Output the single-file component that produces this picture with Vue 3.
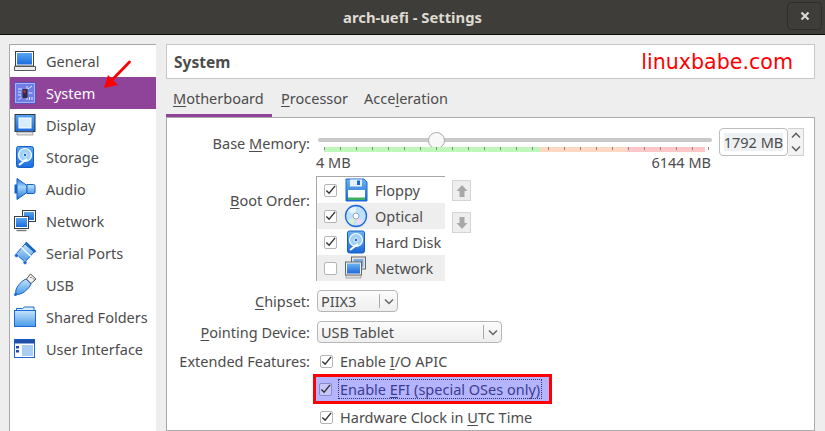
<script setup>
const sideItems = [
  { name: 'General', icon: 'general' },
  { name: 'System', icon: 'system', active: true },
  { name: 'Display', icon: 'display' },
  { name: 'Storage', icon: 'storage' },
  { name: 'Audio', icon: 'audio' },
  { name: 'Network', icon: 'network' },
  { name: 'Serial Ports', icon: 'serial' },
  { name: 'USB', icon: 'usb' },
  { name: 'Shared Folders', icon: 'folder' },
  { name: 'User Interface', icon: 'ui' },
]
const boot = [
  { name: 'Floppy', icon: 'floppy', on: true },
  { name: 'Optical', icon: 'optical', on: true, alt: true },
  { name: 'Hard Disk', icon: 'storage', on: true },
  { name: 'Network', icon: 'bootnet', on: false, alt: true },
]
const ticks = Array.from({ length: 25 }, (_, i) => i * 16)
</script>

<template>
  <div class="win">
    <header class="titlebar">
      <span class="title">arch-uefi - Settings</span>
      <span class="close">
        <svg width="10" height="10" viewBox="0 0 10 10"><path d="M1.500 1.500l7 7M8.500 1.500l-7 7" stroke="#d8d8d8" stroke-width="2.200"/></svg>
      </span>
    </header>

    <div class="body">
      <nav class="side">
        <div v-for="it in sideItems" :key="it.name" class="side-item" :class="{ active: it.active }">
          <svg class="side-icon" width="24" height="24" viewBox="0 0 24 24">
            <defs>
              <linearGradient id="blu" x1="0" y1="0" x2="0" y2="1"><stop offset="0" stop-color="#58a6f0"/><stop offset="1" stop-color="#1a6ce0"/></linearGradient>
              <linearGradient id="blu2" x1="0" y1="0" x2="0" y2="1"><stop offset="0" stop-color="#c5e4fb"/><stop offset="1" stop-color="#4b9ae8"/></linearGradient>
              <linearGradient id="horn" x1="0" y1="0" x2="0" y2="1"><stop offset="0" stop-color="#1f74dc"/><stop offset=".4" stop-color="#a5d4f8"/><stop offset="1" stop-color="#1f74dc"/></linearGradient>
            </defs>
            <template v-if="it.icon === 'general'">
              <rect x="2.500" y="2.500" width="18" height="14.500" fill="#fff" stroke="#3a3f46"/>
              <rect x="4" y="4" width="15" height="11.500" fill="url(#blu)"/>
              <path d="M1.500 17.500h21v4h-21z" fill="#ececec" stroke="#55585c"/>
            </template>
            <template v-else-if="it.icon === 'system'">
              <rect x="2.500" y="2.500" width="19" height="19" fill="#6f7de4" stroke="#a9b2f5"/>
              <rect x="1.500" y="1.500" width="21" height="21" fill="none" stroke="#4a56c8" stroke-width=".8"/>
              <path d="M5 8h4M5 11h3M5 14h3M15 8l4-3M15.500 12h4M14 19v-3M16.500 19v-3M19 19v-3M5.500 19l3-3M14 5v3" stroke="#e6e8ff" stroke-width="1"/>
              <rect x="9.500" y="8" width="5" height="9" fill="#302a4a"/>
              <rect x="10.500" y="9" width="2" height="3" fill="#b03a3a"/>
            </template>
            <template v-else-if="it.icon === 'display'">
              <rect x="2" y="1.500" width="20" height="17" fill="url(#blu)" stroke="#33383f"/>
              <rect x="6" y="5" width="12" height="10" fill="#d8ecfb" stroke="#fff"/>
              <path d="M4 19h16v3H4z" fill="#e4e4e4" stroke="#8a8a8a" stroke-width=".7"/>
            </template>
            <template v-else-if="it.icon === 'storage'">
              <rect x="3.500" y="1.500" width="17" height="21" rx="2" fill="url(#blu)" stroke="#1560c4"/>
              <circle cx="12" cy="10" r="6.500" fill="#9fd0f6" stroke="#fff" stroke-width="1.200"/>
              <circle cx="12" cy="10" r="1.800" fill="#1c68d8" stroke="#fff" stroke-width=".8"/>
              <path d="M6 20l8-6" stroke="#fff" stroke-width="2"/>
            </template>
            <template v-else-if="it.icon === 'audio'">
              <rect x="1.500" y="7.500" width="3" height="9" fill="#1560c4"/>
              <path d="M4 1.500l10 7v7l-10 7z" fill="url(#horn)" stroke="#1560c4"/>
              <path d="M14 7.500h6.500a1.500 1.500 0 0 1 1.500 1.500v6a1.500 1.500 0 0 1-1.500 1.500H14z" fill="url(#blu2)" stroke="#1560c4"/>
            </template>
            <template v-else-if="it.icon === 'network'">
              <rect x="9.500" y="1.500" width="13" height="11" fill="#fff" stroke="#3a3f46"/>
              <rect x="11" y="3" width="10" height="8" fill="url(#blu)"/>
              <rect x="1.500" y="7.500" width="14" height="12" fill="#fff" stroke="#3a3f46"/>
              <rect x="3" y="9" width="11" height="9" fill="url(#blu)"/>
              <path d="M3.500 21.500h10" stroke="#777" stroke-width="1.400"/>
            </template>
            <template v-else-if="it.icon === 'serial'">
              <path d="M3 13L12 3l9 8-9 10z" fill="url(#blu2)" stroke="#1560c4"/>
              <path d="M12.500 1.500l10 9.500" stroke="#1560c4" stroke-width="2.400"/>
              <path d="M8 6l10 9.500" stroke="#eaf4fd" stroke-width="1.600"/>
              <circle cx="3.500" cy="14.500" r="2" fill="#1c68d8" stroke="#fff" stroke-width=".5"/>
              <circle cx="12" cy="21.500" r="2" fill="#1c68d8" stroke="#fff" stroke-width=".5"/>
            </template>
            <template v-else-if="it.icon === 'usb'">
              <path d="M3 21c-2-5 5-13 10-15l5 5c-2 5-10 12-15 10z" fill="url(#blu2)" stroke="#1560c4"/>
              <path d="M13.500 6l4-5 5.500 5-5 4.500z" fill="#f2f2f2" stroke="#555"/>
              <path d="M17.500 4l1 1M20 5.500l1 1" stroke="#333"/>
              <circle cx="2.500" cy="21.500" r="1.500" fill="#1c68d8"/>
            </template>
            <template v-else-if="it.icon === 'folder'">
              <path d="M3.500 6V3.500h6l2-1.500h9.500V6z" fill="#dceefc" stroke="#1c68d8"/>
              <rect x="1.500" y="5.500" width="21" height="16" fill="url(#blu2)" stroke="#1c68d8"/>
            </template>
            <template v-else-if="it.icon === 'ui'">
              <rect x="1.500" y="2.500" width="20" height="18" fill="#fff" stroke="#1c68d8"/>
              <rect x="1.500" y="2.500" width="20" height="4" fill="#1f4fa8"/>
              <rect x="3" y="9" width="3" height="2.500" fill="#1f4fa8"/>
              <rect x="3" y="13" width="3" height="2.500" fill="#1f4fa8"/>
              <rect x="9" y="8" width="11" height="11" fill="#a8cdf5"/>
            </template>
          </svg>
          <span>{{ it.name }}</span>
        </div>
        <svg class="arrow" width="34" height="32" viewBox="0 0 34 32"><path d="M29.500 2L12 20" stroke="#f00" stroke-width="2.800" stroke-linecap="round"/><path d="M4 28L8 15 18 25z" fill="#f00"/></svg>
      </nav>

      <main class="main">
        <div class="heading">
          <span class="h-title">System</span>
          <span class="brand">linuxbabe.com</span>
        </div>

        <div class="tabs">
          <span class="tab active"><u>M</u>otherboard</span>
          <span class="tab"><u>P</u>rocessor</span>
          <span class="tab">Acce<u>l</u>eration</span>
        </div>

        <section class="panel">
          <div class="row mem-row">
            <label class="lab">Base <u>M</u>emory:</label>
            <div class="slider">
              <div class="track"><span class="knob"></span></div>
              <div class="band">
                <span class="b-green"></span><span class="b-orange"></span><span class="b-red"></span>
                <i v-for="t in ticks" :key="t" class="tick" :style="{ left: t + 'px' }"></i>
              </div>
              <div class="ends"><span>4 MB</span><span>6144 MB</span></div>
            </div>
            <div class="spin">
              <span class="spin-field"><span class="spin-val">1792 MB</span></span>
              <span class="spin-btns">
                <svg width="10" height="7" viewBox="0 0 10 7"><path d="M1 5.500l4-4 4 4" stroke="#666" stroke-width="1.600" fill="none"/></svg>
                <svg width="10" height="7" viewBox="0 0 10 7"><path d="M1 1.500l4 4 4-4" stroke="#666" stroke-width="1.600" fill="none"/></svg>
              </span>
            </div>
          </div>

          <div class="row boot-row">
            <label class="lab boot-lab"><u>B</u>oot Order:</label>
            <div class="boot-list">
              <div v-for="b in boot" :key="b.name" class="boot-item" :class="{ alt: b.alt }">
                <span class="cb">
                  <svg v-if="b.on" width="12" height="12" viewBox="0 0 12 12"><path d="M1.500 6.500l3 3L11 1.500" stroke="#333" stroke-width="1.500" fill="none"/></svg>
                </span>
                <svg class="boot-icon" width="24" height="24" viewBox="0 0 24 24">
                  <defs>
                    <linearGradient id="b1" x1="0" y1="0" x2="0" y2="1"><stop offset="0" stop-color="#6db4f2"/><stop offset="1" stop-color="#1c68d8"/></linearGradient>
                  </defs>
                  <template v-if="b.icon === 'floppy'">
                    <path d="M2 1h18l3 3v19H2z" fill="url(#b1)" stroke="#1c68d8"/>
                    <rect x="6" y="1.500" width="12" height="7" fill="#e8f1fb"/>
                    <rect x="13" y="2.500" width="3" height="4.500" fill="#1c68d8"/>
                    <rect x="4" y="12" width="17" height="10" fill="#fff"/>
                    <rect x="4" y="19.500" width="17" height="2.500" fill="#3dae5c"/>
                  </template>
                  <template v-else-if="b.icon === 'optical'">
                    <circle cx="12" cy="12" r="10.500" fill="#bfe0fa" stroke="#1c68d8" stroke-width="1.300"/>
                    <path d="M12 12L4 7a9 9 0 0 1 8-4z" fill="#e6f3fd"/>
                    <path d="M12 12l8 5a9 9 0 0 1-8 4z" fill="#eadcf5"/>
                    <path d="M12 12l-8 5a9 9 0 0 0 5 4z" fill="#d9f1c9"/>
                    <circle cx="12" cy="12" r="3" fill="#fff" stroke="#8aa6c8"/>
                  </template>
                  <template v-else-if="b.icon === 'storage'">
                    <rect x="3.500" y="1" width="17" height="22" rx="2" fill="url(#b1)" stroke="#1560c4"/>
                    <circle cx="12" cy="10" r="6.500" fill="#9fd0f6" stroke="#fff" stroke-width="1.200"/>
                    <circle cx="12" cy="10" r="1.800" fill="#1c68d8" stroke="#fff" stroke-width=".8"/>
                    <path d="M6 20l8-6" stroke="#fff" stroke-width="2"/>
                  </template>
                  <template v-else>
                    <rect x="7.500" y="1" width="14" height="12" fill="#e8e8e8" stroke="#666"/>
                    <rect x="9.500" y="3" width="10" height="8" fill="#7ba9e4"/>
                    <rect x="1.500" y="6" width="16" height="13" fill="#f4f4f4" stroke="#666"/>
                    <rect x="3" y="7.500" width="13" height="10" fill="url(#b1)"/>
                    <rect x="2" y="19.500" width="15" height="2.500" fill="#ddd" stroke="#888" stroke-width=".6"/>
                  </template>
                </svg>
                <span class="boot-name">{{ b.name }}</span>
              </div>
            </div>
            <div class="updown">
              <span class="ud">
                <svg width="12" height="14" viewBox="0 0 12 14"><path d="M6 1l5.500 6H8.500v6h-5V7H.5z" fill="#a8a8a8"/></svg>
              </span>
              <span class="ud">
                <svg width="12" height="14" viewBox="0 0 12 14"><path d="M6 13L.5 7h3V1h5v6h3z" fill="#a8a8a8"/></svg>
              </span>
            </div>
          </div>

          <div class="row chip-row">
            <label class="lab"><u>C</u>hipset:</label>
            <span class="select chip">PIIX3<i class="caret"><svg width="10" height="7" viewBox="0 0 10 7"><path d="M1 1.500l4 4 4-4" stroke="#666" stroke-width="1.500" fill="none"/></svg></i></span>
          </div>
          <div class="row point-row">
            <label class="lab"><u>P</u>ointing Device:</label>
            <span class="select pointing">USB Tablet<i class="caret"><svg width="10" height="7" viewBox="0 0 10 7"><path d="M1 1.500l4 4 4-4" stroke="#666" stroke-width="1.500" fill="none"/></svg></i></span>
          </div>

          <div class="row ext-row">
            <label class="lab">Extended Features:</label>
            <span class="check">
              <span class="cb small"><svg width="12" height="12" viewBox="0 0 12 12"><path d="M1.500 6.500l3 3L11 1.500" stroke="#333" stroke-width="1.500" fill="none"/></svg></span>
              <span>Enable <u>I</u>/O APIC</span>
            </span>
          </div>
          <div class="row efi-row">
            <span class="lab"></span>
            <span class="efi">
              <span class="cb small tint"><svg width="12" height="12" viewBox="0 0 12 12"><path d="M1.500 6.500l3 3L11 1.500" stroke="#333" stroke-width="1.500" fill="none"/></svg></span>
              <span class="focus">Enable <u>E</u>FI (special OSes only)</span>
            </span>
          </div>
          <div class="row hw-row">
            <span class="lab"></span>
            <span class="check">
              <span class="cb small"><svg width="12" height="12" viewBox="0 0 12 12"><path d="M1.500 6.500l3 3L11 1.500" stroke="#333" stroke-width="1.500" fill="none"/></svg></span>
              <span>Hardware Clock in <u>U</u>TC Time</span>
            </span>
          </div>
        </section>
      </main>
    </div>
  </div>
</template>

<style>
html, body { margin: 0; background: #eeeeee; overflow: hidden; }
</style>

<style scoped>
.win {
  width: 825px; height: 431px; overflow: hidden; background: #eee; color: #4c4c4c;
  font: 14.500px/18px "Noto Sans", "Open Sans", sans-serif;
  display: flex; flex-direction: column;
}
u { text-underline-offset: 2px; text-decoration-thickness: 1px; }
.titlebar {
  height: 34px; background: #3e3d39; border-bottom: 1px solid #0c0c0c; flex: none;
  display: flex; align-items: center; justify-content: center; position: relative;
}
.title { color: #dfdbd2; font-weight: 700; font-size: 14.800px; }
.close {
  position: absolute; right: 3px; top: 2px; width: 33px; height: 26px; border: 1px solid #2e2d2a; border-radius: 4px;
  display: flex; align-items: center; justify-content: center; background: #3e3d39;
}
.body { flex: 1; min-height: 0; display: flex; padding: 9px 10px 0 9px; }
.side {
  width: 146px; background: #fff; border: 1px solid #a8a8a8; border-width: 1px 0 0 1px; position: relative; flex: none;
}
.side-item { height: 32px; display: flex; align-items: center; padding-left: 3px; color: #4c4c4c; }
.side-item span { margin-left: 9px; }
.side-item.active { background: #8f4499; color: #fff; }
.side-icon { flex: none; }
.arrow { position: absolute; left: 90px; top: 15px; }
.main { flex: 1; margin-left: 10px; display: flex; flex-direction: column; min-width: 0; }
.heading {
  height: 33px; background: #fff; border: 1px solid #c8c8c8; display: flex; align-items: center;
  padding: 0 21px 0 7px; justify-content: space-between; flex: none;
}
.h-title { font-weight: 700; font-size: 15.500px; }
.brand { color: #f00; font: 20.600px/24px "DejaVu Sans", sans-serif; }
.tabs { display: flex; height: 38px; align-items: flex-end; flex: none; }
.tab { padding: 0 8px 5px; height: 28px; box-sizing: border-box; display: block; }
.tab.active { border-bottom: 3px solid #8f4499; padding: 0 0 2px 7px; width: 106px; margin-right: 1px; }
.panel { flex: 1; background: #fff; border: 1px solid #ababab; margin-top: 0; min-height: 0; overflow: hidden; }
.row { display: flex; align-items: center; }
.lab { width: 143px; text-align: right; flex: none; display: block; margin-right: 7px; }
.mem-row { align-items: flex-start; height: 46px; box-sizing: border-box; padding-top: 11px; }
.mem-row .lab { margin-top: 5px; }
.slider { width: 394px; margin-left: 1px; flex: none; position: relative; }
.track { height: 4px; background: #c9c9c9; border-radius: 2px; margin-top: 9px; position: relative; }
.knob {
  position: absolute; left: 110px; top: -6px; width: 15px; height: 15px; border-radius: 50%;
  background: #f8f8f8; border: 1px solid #a8a8a8;
}
.band { height: 5px; display: flex; margin: 5px 7px 0 6px; position: relative; }
.b-green { width: 216px; flex: none; background: #bff7bb; }
.b-orange { width: 87px; flex: none; background: #ffd7c2; }
.b-red { width: 78px; flex: none; background: #ffc7c7; }
.tick { position: absolute; top: 0; width: 1px; height: 3px; background: #888; }
.ends { display: flex; justify-content: space-between; margin: 1px 1px 0 -2px; }
.spin { margin-left: 7px; display: flex; height: 28px; flex: none; margin-top: -1px; }
.spin-field {
  width: 69px; height: 28px; box-sizing: border-box; border: 1px solid #bdbdbd; border-radius: 4px;
  display: flex; align-items: center; justify-content: center;
}
.spin-val { background: #eef1f3; }
.spin-btns {
  width: 15px; display: flex; flex-direction: column; justify-content: space-around; align-items: center;
  border: 1px solid #d0d0d0; border-left: 0; background: #f3f3f3;
}
.boot-row { align-items: flex-start; margin-top: 12px; height: 106px; }
.boot-lab { margin-top: 15px; }
.boot-list { width: 128px; border: 1px solid #a8a8a8; border-width: 1px 0 0 1px; flex: none; margin-left: -1px; }
.boot-item { height: 26px; display: flex; align-items: center; padding-left: 7px; }
.boot-item.alt { background: #eeeeee; }
.cb {
  width: 13px; height: 13px; box-sizing: border-box; border: 1px solid #b5b5b5; border-radius: 2px; background: #fff;
  display: inline-flex; flex: none; align-items: center; justify-content: center;
}
.boot-icon { margin-left: 7px; flex: none; }
.boot-name { margin-left: 7px; white-space: nowrap; }
.updown { margin-left: 7px; display: flex; flex-direction: column; gap: 11px; padding-top: 4px; }
.ud {
  width: 17px; height: 19px; background: #eee; border: 1px solid #d4d4d4; display: flex; align-items: center; justify-content: center;
}
.chip-row { margin-top: 8px; height: 22px; }
.point-row { margin-top: 9px; height: 22px; }
.select {
  height: 22px; box-sizing: border-box; border: 1px solid #b5b5b5; border-radius: 4px; padding-left: 3px;
  background: linear-gradient(#fbfbfb, #efefef); position: relative; display: flex; align-items: center;
}
.chip { width: 81px; }
.pointing { width: 185px; }
.caret {
  position: absolute; right: 0; top: 3px; bottom: 3px; width: 17px; border-left: 1px solid #aaa;
  display: flex; align-items: center; justify-content: center;
}
.ext-row { margin-top: 7px; height: 22px; }
.check { display: flex; align-items: center; margin-left: 3px; white-space: nowrap; }
.cb.small { margin-right: 7px; }
.efi-row { margin-top: 2px; height: 30px; }
.efi {
  width: 239px; height: 30px; box-sizing: border-box; border: 3px solid #f00; background: #b4b4ff; color: #3d3d8c;
  display: flex; align-items: center; padding-left: 3px; margin-left: -4px; white-space: nowrap;
}
.cb.tint { background: #c6c6fa; border-color: #8a8ac8; margin-right: 7px; }
.focus { outline: 1px dotted #33337a; padding: 0 1px; line-height: 18px; }
.hw-row { margin-top: 2px; height: 22px; }
</style>
